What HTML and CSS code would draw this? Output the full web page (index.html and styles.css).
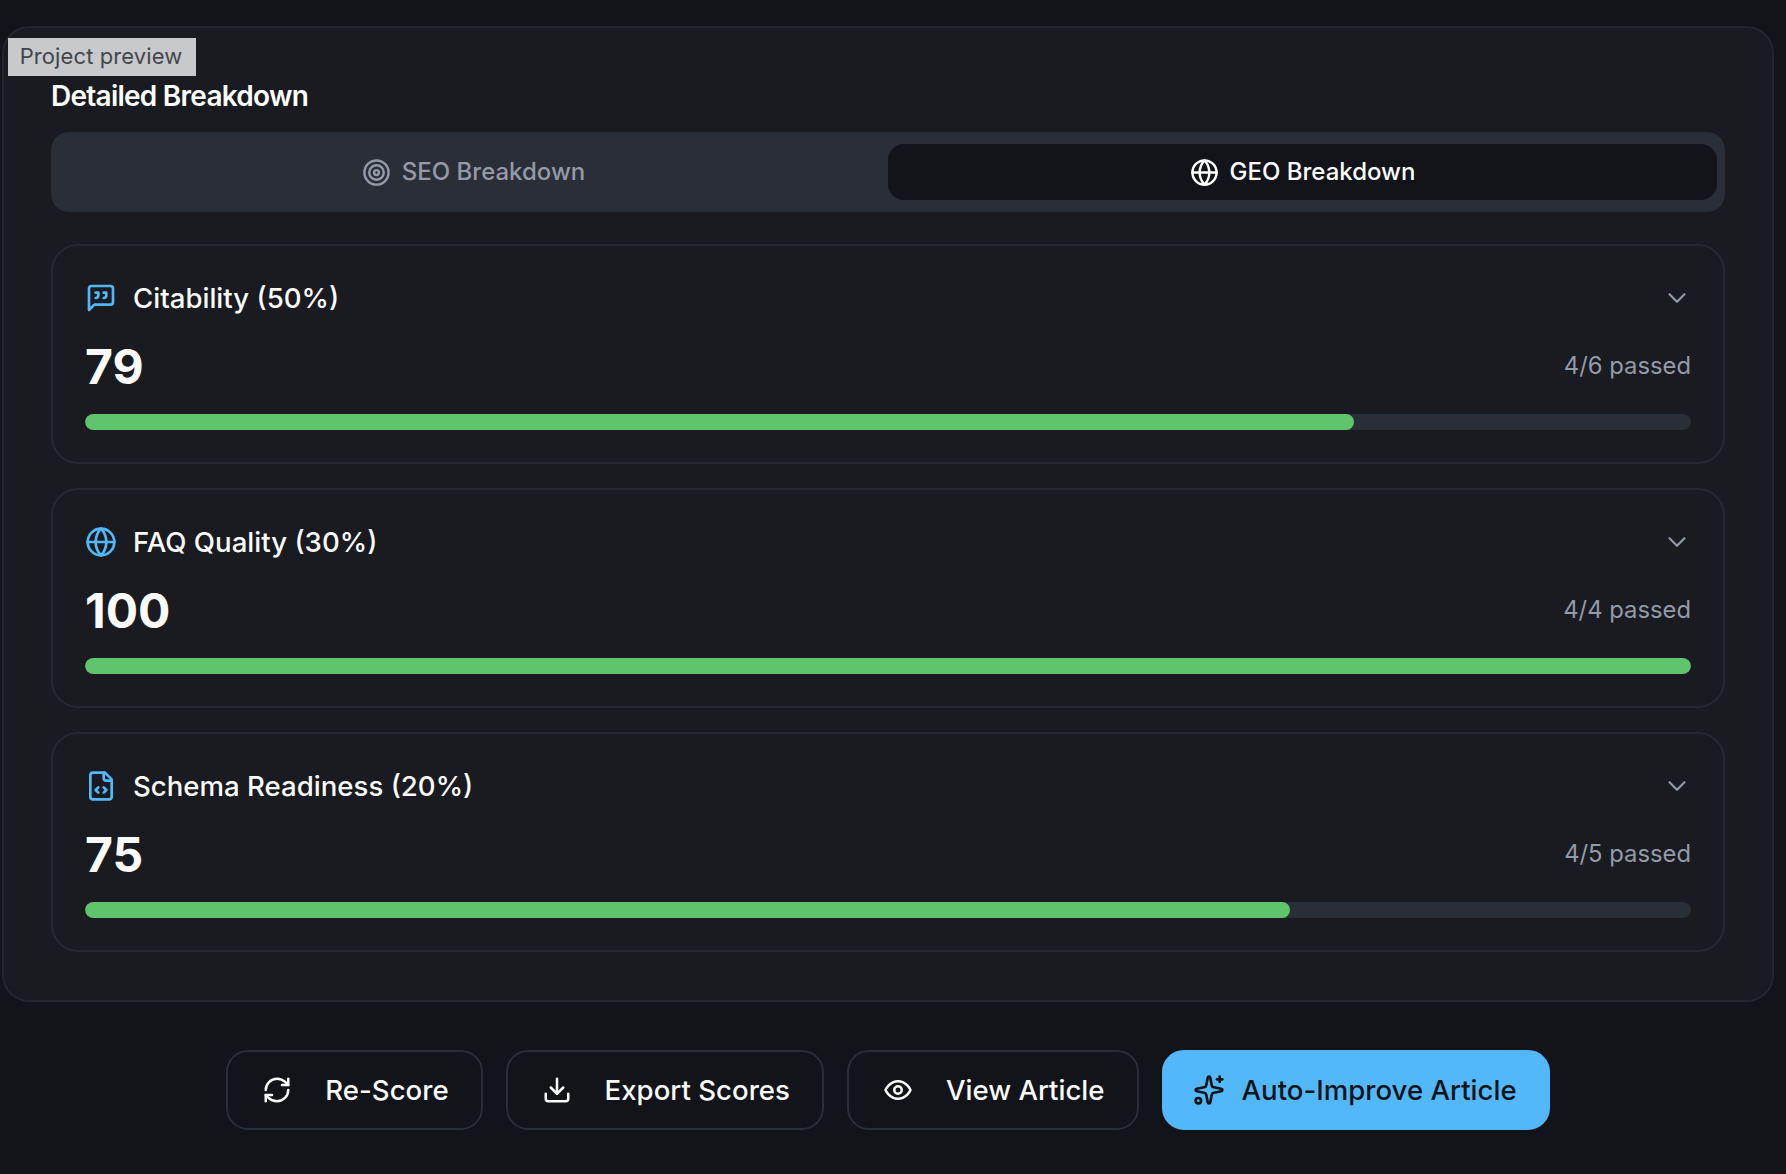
FILE: index.html
```html
<!DOCTYPE html>
<html lang="en">
<head>
<meta charset="utf-8">
<title>Detailed Breakdown</title>
<link rel="stylesheet" href="styles.css">
</head>
<body>
<div class="preview-tag">Project preview</div>
<main class="page">
  <section class="panel">
    <h2 class="panel-title">Detailed Breakdown</h2>
    <div class="tabs">
      <button class="tab">
        <svg class="icon tab-icon" viewBox="0 0 24 24"><circle cx="12" cy="12" r="10"/><circle cx="12" cy="12" r="6"/><circle cx="12" cy="12" r="2"/></svg>
        SEO Breakdown
      </button>
      <button class="tab tab-active">
        <svg class="icon tab-icon" viewBox="0 0 24 24"><circle cx="12" cy="12" r="10"/><path d="M12 2a14.5 14.5 0 0 0 0 20 14.5 14.5 0 0 0 0-20"/><path d="M2 12h20"/></svg>
        GEO Breakdown
      </button>
    </div>
    <div class="metric">
      <div class="metric-head">
        <svg class="icon metric-icon" viewBox="0 0 24 24"><path d="M21 15a2 2 0 0 1-2 2H7l-4 4V5a2 2 0 0 1 2-2h14a2 2 0 0 1 2 2z"/><path d="M8 12a2 2 0 0 0 2-2V8H8"/><path d="M14 12a2 2 0 0 0 2-2V8h-2"/></svg>
        <span class="metric-name">Citability (50%)</span>
        <svg class="icon chevron" viewBox="0 0 24 24"><path d="m6 9 6 6 6-6"/></svg>
      </div>
      <div class="metric-score"><span class="score">79</span><span class="passed">4/6 passed</span></div>
      <div class="track"><div class="fill" style="width:79%"></div></div>
    </div>
    <div class="metric">
      <div class="metric-head">
        <svg class="icon metric-icon" viewBox="0 0 24 24"><circle cx="12" cy="12" r="10"/><path d="M12 2a14.5 14.5 0 0 0 0 20 14.5 14.5 0 0 0 0-20"/><path d="M2 12h20"/></svg>
        <span class="metric-name">FAQ Quality (30%)</span>
        <svg class="icon chevron" viewBox="0 0 24 24"><path d="m6 9 6 6 6-6"/></svg>
      </div>
      <div class="metric-score"><span class="score">100</span><span class="passed">4/4 passed</span></div>
      <div class="track"><div class="fill" style="width:100%"></div></div>
    </div>
    <div class="metric">
      <div class="metric-head">
        <svg class="icon metric-icon" viewBox="0 0 24 24"><path d="M15 2H6a2 2 0 0 0-2 2v16a2 2 0 0 0 2 2h12a2 2 0 0 0 2-2V7Z"/><path d="M14 2v4a2 2 0 0 0 2 2h4"/><path d="m10 13-2 2 2 2"/><path d="m14 17 2-2-2-2"/></svg>
        <span class="metric-name">Schema Readiness (20%)</span>
        <svg class="icon chevron" viewBox="0 0 24 24"><path d="m6 9 6 6 6-6"/></svg>
      </div>
      <div class="metric-score"><span class="score">75</span><span class="passed">4/5 passed</span></div>
      <div class="track"><div class="fill" style="width:75%"></div></div>
    </div>
  </section>
  <div class="actions">
    <button class="btn">
      <svg class="icon btn-icon" viewBox="0 0 24 24"><path d="M3 12a9 9 0 0 1 9-9 9.75 9.75 0 0 1 6.74 2.74L21 8"/><path d="M21 3v5h-5"/><path d="M21 12a9 9 0 0 1-9 9 9.75 9.75 0 0 1-6.74-2.74L3 16"/><path d="M8 16H3v5"/></svg>
      Re-Score
    </button>
    <button class="btn">
      <svg class="icon btn-icon" viewBox="0 0 24 24"><path d="M21 15v4a2 2 0 0 1-2 2H5a2 2 0 0 1-2-2v-4"/><path d="m7 10 5 5 5-5"/><path d="M12 15V3"/></svg>
      Export Scores
    </button>
    <button class="btn">
      <svg class="icon btn-icon" viewBox="0 0 24 24"><path d="M2 12s3-7 10-7 10 7 10 7-3 7-10 7-10-7-10-7Z"/><circle cx="12" cy="12" r="3"/></svg>
      View Article
    </button>
    <button class="btn btn-primary">
      <svg class="icon btn-icon" viewBox="0 0 24 24"><path d="M11.017 2.814a1 1 0 0 1 1.966 0l1.051 5.558a2 2 0 0 0 1.594 1.594l5.558 1.051a1 1 0 0 1 0 1.966l-5.558 1.051a2 2 0 0 0-1.594 1.594l-1.051 5.558a1 1 0 0 1-1.966 0l-1.051-5.558a2 2 0 0 0-1.594-1.594l-5.558-1.051a1 1 0 0 1 0-1.966l5.558-1.051a2 2 0 0 0 1.594-1.594z"/><path d="M20 2v4"/><path d="M22 4h-4"/><circle cx="4" cy="20" r="2"/></svg>
      Auto-Improve Article
    </button>
  </div>
</main>
</body>
</html>
```
FILE: styles.css
```css
* { box-sizing: border-box; }
html, body { margin: 0; height: 100%; }
body {
  background: #121419;
  color: #fafafa;
  font-family: Inter, "Liberation Sans", sans-serif;
  overflow: hidden;
  position: relative;
}
.preview-tag {
  position: absolute;
  left: 8px;
  top: 38px;
  width: 188px;
  height: 38px;
  padding: 0 2px 2px 0;
  display: flex;
  align-items: center;
  justify-content: center;
  background: #c8c9cc;
  color: #44454a;
  font-size: 22px;
  letter-spacing: 0.1px;
  z-index: 2;
}
.page { width: 1776px; padding: 26px 0 0 2px; }
.panel {
  width: 1772px;
  height: 976px;
  padding: 51px 47px 0;
  background: #191b20;
  border: 2px solid #23262d;
  border-radius: 27px;
}
.panel-title {
  margin: 0 0 18px;
  height: 35px;
  line-height: 35px;
  font-size: 28px;
  font-weight: 600;
  letter-spacing: -0.75px;
  color: #fff;
}
.tabs {
  display: flex;
  height: 80px;
  padding: 12px 8px;
  background: #2a2e37;
  border-radius: 18px;
  margin-bottom: 32px;
}
.tab {
  flex: 1;
  display: flex;
  align-items: center;
  justify-content: center;
  gap: 11px;
  padding: 0 0 2px;
  background: none;
  border: 0;
  border-radius: 16px;
  color: #939aa8;
  font: 500 24px Inter, "Liberation Sans", sans-serif;
}
.tab-active { background: #121419; color: #fff; }
.tab-icon { width: 29px; height: 29px; margin-top: 2px; }
.icon {
  fill: none;
  stroke: currentColor;
  stroke-width: 2;
  stroke-linecap: round;
  stroke-linejoin: round;
  flex: none;
}
.metric {
  height: 220px;
  margin-bottom: 24px;
  padding: 32px 32px 0;
  border: 2px solid #25282f;
  border-radius: 27px;
}
.metric-head {
  display: flex;
  align-items: center;
  height: 40px;
}
.metric-icon { width: 32px; height: 32px; color: #53b8fa; margin-right: 16px; }
.metric-name { flex: 1; font-size: 27.6px; font-weight: 500; color: #fafafa; }
.chevron { width: 30px; height: 30px; color: #939aa8; margin-right: -1px; stroke-width: 1.7; }
.metric-score {
  display: flex;
  align-items: center;
  justify-content: space-between;
  height: 60px;
  margin-top: 17px;
}
.score { font-size: 48px; font-weight: 700; color: #fafafa; padding-top: 2px; }
.passed { font-size: 23.8px; color: #939aa8; }
.track {
  height: 16px;
  margin-top: 19px;
  background: #2a2e37;
  border-radius: 8px;
  overflow: hidden;
}
.fill { height: 100%; background: #5fc56c; border-radius: 8px; }
.actions {
  display: flex;
  justify-content: center;
  gap: 23px;
  margin-top: 48px;
  padding-right: 2px;
}
.btn {
  display: flex;
  align-items: center;
  height: 80px;
  padding: 0 32px 0 34px;
  gap: 33px;
  background: none;
  border: 2px solid #2a2e37;
  border-radius: 22px;
  color: #fafafa;
  font: 500 27.6px Inter, "Liberation Sans", sans-serif;
}
.btn-icon { width: 30px; height: 30px; }
.btn-primary {
  background: #53b8fa;
  border-color: #53b8fa;
  color: #121419;
  gap: 17px;
  padding: 0 31px 0 29px;
}
.btn-primary .btn-icon { width: 32px; height: 32px; }
```
